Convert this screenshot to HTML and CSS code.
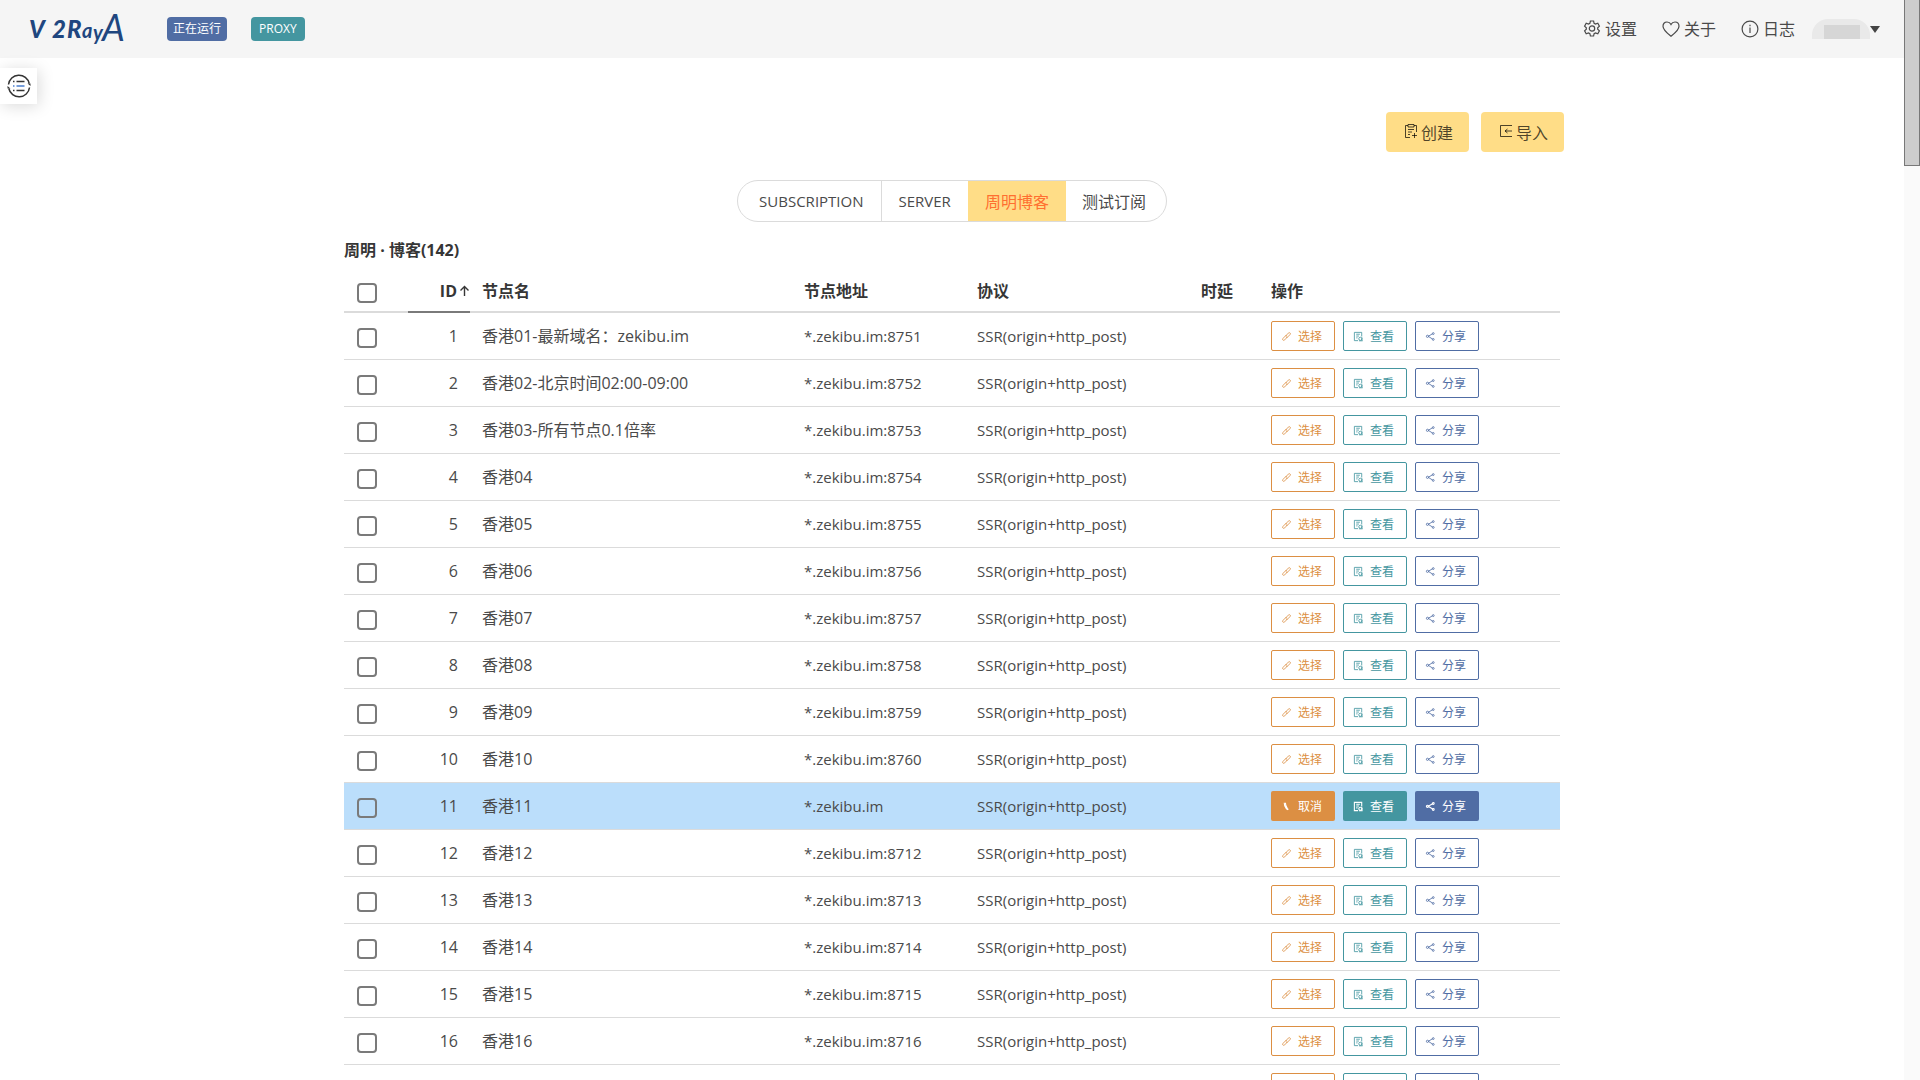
FILE: index.html
```
<!DOCTYPE html>
<html lang="zh-CN">

<head>
    <meta charset="UTF-8">
    <meta name="viewport" content="width=device-width, initial-scale=1.0">
    <title>v2rayA</title>
    <link rel="stylesheet" href="styles.css">
</head>

<body>
    <!-- icon sprite -->
    <svg class="sprite" aria-hidden="true">
        <symbol id="i-link" viewBox="0 0 12 12">
            <path d="M5 5.500 8 2.300c1.300-1.300 3 .2 1.900 1.500L7.500 6.400c-.6.6-1.400.6-1.900.1M7 6.500 4 9.700c-1.300 1.300-3-.2-1.900-1.500l2.400-2.600c.6-.6 1.400-.6 1.900-.1" />
        </symbol>
        <symbol id="i-unlink" viewBox="0 0 12 12">
            <path d="M3.500 2c0 2.500.8 4.500 2.300 6.200M4.800 2c0 2.500.7 4.300 2 6M5.800 8.200l1.500 1.500M6.800 8l1.200 1.500" />
        </symbol>
        <symbol id="i-view" viewBox="0 0 12 12">
            <path d="M5.500 10.500h-4v-9h8v4.500M3.500 3.500h4M3.500 5.500h3M3.500 7.500h1.500" />
            <circle cx="8" cy="8.500" r="1.700" />
            <path d="M9.800 7v3.800M6.500 10.700h4" />
        </symbol>
        <symbol id="i-share" viewBox="0 0 12 12">
            <path d="M8.300 3 3.500 5.800l4.800 3" />
            <circle cx="9" cy="2.800" r="1" />
            <circle cx="2.700" cy="5.800" r="1.200" />
            <circle cx="9" cy="9.200" r="1" />
        </symbol>
    </svg>

    <div class="page">
        <nav class="navbar">
            <a class="brand" href="#" aria-label="V2RayA">
                <svg width="100" height="50" viewBox="0 0 100 50">
                    <text class="brand-bold" x="1" y="34">V</text>
                    <text class="brand-bold" x="24" y="34">2</text>
                    <text class="brand-bold" x="39" y="34">R</text>
                    <text class="brand-small" x="54" y="34">a</text>
                    <text class="brand-small" x="65" y="36">y</text>
                    <text class="brand-tall" x="74" y="37">A</text>
                </svg>
            </a>
            <span class="tag tag-running">正在运行</span>
            <span class="tag tag-proxy">PROXY</span>
            <div class="nav-right">
                <a href="#">
                    <svg class="nav-icon" viewBox="0 0 18 18">
                        <path d="M7.400 1h3.200l.5 2.300 1.400.8 2.300-.8 1.600 2.800-1.700 1.600v1.600l1.700 1.600-1.600 2.800-2.300-.8-1.400.8-.5 2.300H7.400l-.5-2.300-1.400-.8-2.300.8-1.600-2.800 1.700-1.600V7.700L1.600 6.100l1.600-2.800 2.300.8 1.400-.8z" />
                        <circle cx="9" cy="8.500" r="2.700" />
                    </svg>设置</a>
                <a href="#">
                    <svg class="nav-icon" viewBox="0 0 18 18">
                        <path d="M9 16.200C5 13 1 10 1 6.200 1 3.600 2.900 2 5 2c1.700 0 3.200.9 4 2.500C9.800 2.900 11.300 2 13 2c2.100 0 4 1.600 4 4.200 0 3.800-4 6.800-8 10z" />
                    </svg>关于</a>
                <a href="#">
                    <svg class="nav-icon" viewBox="0 0 18 18">
                        <circle cx="9" cy="9" r="7.900" />
                        <path d="M9 7.500V13M9 4.800v1.400" />
                    </svg>日志</a>
                <button class="user" type="button" aria-label="user menu">
                    <span class="user-name"><i></i></span>
                    <span class="caret"></span>
                </button>
            </div>
        </nav>

        <button class="side-toggle" type="button" aria-label="menu">
            <svg width="24" height="24" viewBox="0 0 24 24">
                <path d="M1.500 10.500A10.500 10.500 0 0 1 22.200 9.500M22.500 13.500A10.500 10.500 0 0 1 1.800 14.500" />
                <path class="solid" d="M20.500 9.500h3v2.500zM3.500 14.500h-3V12z" />
                <path d="M9.500 7.500h8M9.500 16.500h8M6 7.500h1.500M6 16.500h1.500" />
                <path class="blue" d="M9.500 12h8M6 12h1.500" />
            </svg>
        </button>

        <main class="container">
            <div class="toolbar">
                <button class="btn-warning" type="button">
                    <svg width="14" height="16" viewBox="0 0 14 16">
                        <path d="M4 1.500H1.500v12H6M10 1.500h2.500V8M4 .5h6v2.500H4zM4 5.500h6M4 8h4M4 10.500h2M10.500 9v5M8 11.500h5" />
                    </svg>创建</button>
                <button class="btn-warning" type="button">
                    <svg width="14" height="16" viewBox="0 0 14 16">
                        <path d="M13 1.500H1.500v11H13M13 7H6M8.500 5 6 7l2.500 2" />
                    </svg>导入</button>
            </div>

            <div class="tabs">
                <button type="button">SUBSCRIPTION</button>
                <button type="button">SERVER</button>
                <button type="button" class="active">周明博客</button>
                <button type="button">测试订阅</button>
            </div>

            <section class="nodes">
                <h2>周明 · 博客(142)</h2>
                <table>
                    <colgroup>
                        <col class="col-check">
                        <col class="col-id">
                        <col>
                        <col class="col-addr">
                        <col class="col-proto">
                        <col class="col-delay">
                        <col class="col-ops">
                    </colgroup>
                    <thead>
                        <tr>
                            <th><input type="checkbox" aria-label="全选"></th>
                            <th class="sorted"><span>ID<svg width="11" height="12" viewBox="0 0 11 12"><path d="M5.500 11V1.500M1.500 5.500l4-4 4 4" /></svg></span></th>
                            <th>节点名</th>
                            <th>节点地址</th>
                            <th>协议</th>
                            <th>时延</th>
                            <th>操作</th>
                        </tr>
                    </thead>
                    <tbody id="rows"></tbody>
                </table>
            </section>
        </main>
    </div>
    <div class="scrollbar"><div class="thumb"></div></div>

    <script>
        const names = { 1: '香港01-最新域名：zekibu.im', 2: '香港02-北京时间02:00-09:00', 3: '香港03-所有节点0.1倍率' };
        const connected = 11;
        const total = 17;

        function button(type, icon, text) {
            return `<button type="button" class="btn ${type}"><svg><use href="#i-${icon}"/></svg>${text}</button>`;
        }

        let html = '';
        for (let i = 1; i <= total; i++) {
            const on = i === connected;
            const name = names[i] || '香港' + String(i).padStart(2, '0');
            const port = on ? '' : ':' + (i <= 10 ? 8750 + i : 8700 + i);
            html += `<tr class="${on ? 'connected' : ''}">
                <td><input type="checkbox" aria-label="${name}"></td>
                <td class="num">${i}</td>
                <td>${name}</td>
                <td class="latin">*.zekibu.im${port}</td>
                <td class="latin">SSR(origin+http_post)</td>
                <td></td>
                <td><div class="ops">
                    ${on ? button('orange', 'unlink', '取消') : button('orange', 'link', '选择')}
                    ${button('teal', 'view', '查看')}
                    ${button('blue', 'share', '分享')}
                </div></td>
            </tr>`;
        }
        document.getElementById('rows').innerHTML = html;
    </script>
</body>

</html>
```
FILE: styles.css
```
:root {
    --orange: #dc8f43;
    --teal: #4496a0;
    --blue: #506da4;
    --yellow: #ffdd87;
    --line: #dbdbdb;
    --text: #4a4a4a;
}

* {
    box-sizing: border-box;
}

body {
    margin: 0;
    display: flex;
    height: 100vh;
    overflow: hidden;
    background-color: #fff;
    color: var(--text);
    font-family: "Open Sans", "Noto Sans CJK SC", sans-serif;
    font-size: 16px;
    line-height: 24px;
}

button {
    font-family: inherit;
    cursor: pointer;
}

svg {
    fill: none;
    stroke: currentColor;
    flex: none;
}

.sprite {
    position: absolute;
    width: 0;
    height: 0;
}

.page {
    flex: 1;
    position: relative;
    min-width: 0;
}

/* Navbar */
.navbar {
    display: flex;
    align-items: center;
    height: 58px;
    padding: 0 24px 0 28px;
    background-color: #f5f5f5;
}

.brand {
    display: flex;
    margin-right: 39px;
}

.brand text {
    fill: #20467f;
    stroke: none;
    font-family: Lato, sans-serif;
    font-style: italic;
}

.brand .brand-bold {
    font-size: 24px;
    font-weight: 900;
}

.brand .brand-small {
    font-size: 20px;
    font-weight: bold;
}

.brand .brand-tall {
    font-family: "Liberation Sans Narrow", Lato, sans-serif;
    font-size: 36px;
}

.tag {
    height: 24px;
    border-radius: 4px;
    color: #fff;
    font-size: 12px;
}

.tag-running {
    background-color: var(--blue);
    padding: 0 6px;
    margin-right: 24px;
}

.tag-proxy {
    background-color: var(--teal);
    padding: 0 8px;
}

.nav-right {
    display: flex;
    align-items: center;
    gap: 25px;
    margin-left: auto;
}

.nav-right a {
    display: flex;
    align-items: center;
    gap: 4px;
    color: var(--text);
    text-decoration: none;
}

.nav-icon {
    width: 18px;
    height: 18px;
    stroke-width: 1.2;
}

.user {
    display: flex;
    align-items: center;
    border: 0;
    padding: 0;
    margin-left: -8px;
    background: none;
}

.user-name {
    width: 58px;
    height: 20px;
    padding: 6px 10px 0 12px;
    border-radius: 16px 16px 0 0;
    background-color: #e9e9e9;
}

.user-name i {
    display: block;
    height: 14px;
    background-color: #d6d6d6;
}

.caret {
    border: 5px solid transparent;
    border-top: 7px solid #444;
    border-bottom: 0;
}

.side-toggle {
    position: absolute;
    left: 0;
    top: 68px;
    display: flex;
    padding: 6px 6px 6px 7px;
    border: 0;
    background-color: #fff;
    color: #333;
    box-shadow: 2px 2px 16px rgba(0, 0, 0, 0.15);
}

.side-toggle svg {
    stroke-width: 1.5;
}

.side-toggle .solid {
    fill: #333;
    stroke: none;
}

.side-toggle .blue {
    stroke: #4a7fd0;
}

/* Content */
.container {
    max-width: 1224px;
    margin: 0 auto;
    padding-top: 54px;
}

.toolbar {
    display: flex;
    justify-content: flex-end;
    gap: 12px;
}

.btn-warning {
    display: flex;
    align-items: center;
    gap: 3px;
    height: 40px;
    padding: 0 16px 0 18px;
    border: 0;
    border-radius: 4px;
    background-color: var(--yellow);
    color: rgba(0, 0, 0, 0.7);
    font-size: 16px;
}

.tabs {
    display: flex;
    width: fit-content;
    height: 42px;
    margin: 28px auto 16px;
    border: 1px solid var(--line);
    border-radius: 21px;
    overflow: hidden;
}

.tabs button {
    padding: 0 17px;
    border: 0;
    background: none;
    color: var(--text);
    font-size: 15px;
}

.tabs button:first-child {
    padding-left: 21px;
    border-right: 1px solid var(--line);
}

.tabs button:last-child {
    padding: 0 20px 0 16px;
    font-size: 16px;
}

.tabs .active {
    background-color: var(--yellow);
    color: #ff6f30;
    font-size: 16px;
}

.nodes {
    padding: 0 4px;
}

.nodes h2 {
    margin: 0 0 8px;
    color: #363636;
    font-size: 16px;
    font-weight: bold;
}

table {
    width: 100%;
    table-layout: fixed;
    border-collapse: separate;
    border-spacing: 0;
}

.col-check {
    width: 64px;
}

.col-id {
    width: 62px;
}

.col-addr {
    width: 173px;
}

.col-proto {
    width: 224px;
}

.col-delay {
    width: 70px;
}

.col-ops {
    width: 301px;
}

th,
td {
    height: 47px;
    padding: 0 12px;
    border-bottom: 1px solid var(--line);
    text-align: left;
    vertical-align: middle;
}

th {
    height: 43px;
    border-bottom-width: 2px;
    color: #363636;
}

.sorted {
    padding-right: 0;
    border-bottom-color: #7a7a7a;
}

.sorted span {
    display: flex;
    align-items: center;
    justify-content: flex-end;
    gap: 2px;
}

.sorted svg {
    stroke-width: 1.4;
}

.num {
    text-align: right;
}

.latin {
    font-size: 15px;
}

input[type="checkbox"] {
    display: block;
    appearance: none;
    width: 20px;
    height: 20px;
    margin: 4px 0 0 1px;
    border: 2px solid #7a7a7a;
    border-radius: 4px;
}

.ops {
    display: flex;
    gap: 8px;
}

.btn {
    display: flex;
    align-items: center;
    justify-content: center;
    gap: 6px;
    width: 64px;
    height: 30px;
    padding: 0 3px 0 0;
    border: 1px solid;
    border-radius: 2px;
    background-color: #fff;
    font-size: 12px;
}

.btn svg {
    width: 11px;
    height: 11px;
    stroke-width: 0.9;
}

.btn.orange {
    color: var(--orange);
}

.btn.teal {
    color: var(--teal);
}

.btn.blue {
    color: var(--blue);
}

.connected td {
    background-color: #bbdefb;
}

.connected .btn {
    color: #fff;
    border-color: transparent;
}

.connected .btn svg {
    stroke-width: 1.2;
}

.connected .orange {
    background-color: var(--orange);
}

.connected .teal {
    background-color: var(--teal);
}

.connected .blue {
    background-color: var(--blue);
}

/* Scrollbar */
.scrollbar {
    width: 16px;
    background-color: #fafafa;
}

.thumb {
    height: 166px;
    border: 1px solid #787878;
    border-top: 0;
    background-color: #cdcdcd;
}
```
